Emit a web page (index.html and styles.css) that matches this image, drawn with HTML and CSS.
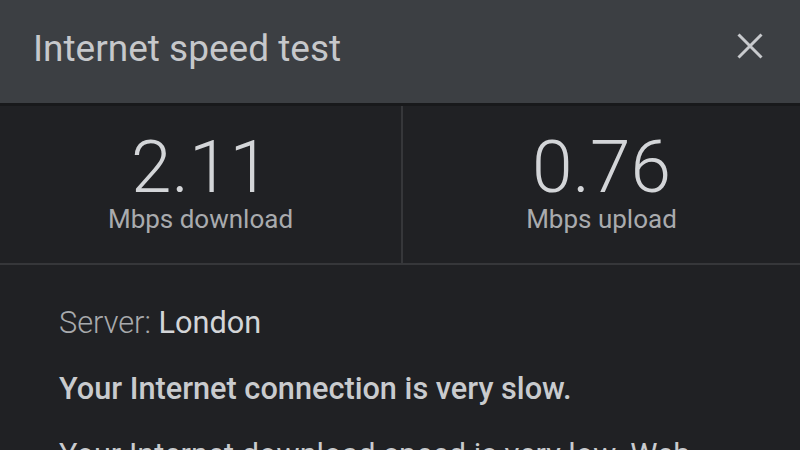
FILE: index.html
```html
<!DOCTYPE html>
<html>
<head>
<meta charset="utf-8">
<link rel="stylesheet" href="styles.css">
</head>
<body>
<div class="dialog">
  <header class="bar">
    <h1 class="title">Internet speed test</h1>
    <svg class="close" width="26" height="26" viewBox="0 0 26 26" aria-label="Close">
      <path d="M1.5 1.5 L24.5 24.5 M24.5 1.5 L1.5 24.5" stroke="#c8cacd" stroke-width="3" fill="none"/>
    </svg>
  </header>
  <section class="stats">
    <div class="stat">
      <div class="value">2.11</div>
      <div class="label">Mbps download</div>
    </div>
    <div class="stat">
      <div class="value">0.76</div>
      <div class="label">Mbps upload</div>
    </div>
  </section>
  <section class="details">
    <p class="server"><span class="key">Server:</span> <span class="val">London</span></p>
    <p class="verdict">Your Internet connection is very slow.</p>
    <p class="desc">Your Internet download speed is very low. Web pages may load slowly.</p>
  </section>
</div>
</body>
</html>
```
FILE: styles.css
```css
html, body {
  margin: 0;
  padding: 0;
  background: #202124;
  overflow: hidden;
}
.dialog {
  width: 800px;
  height: 450px;
  overflow: hidden;
  font-family: Roboto, "Noto Sans", sans-serif;
  background: #202124;
}
.bar {
  height: 106px;
  box-sizing: border-box;
  background: #3c3f43;
  display: flex;
  justify-content: space-between;
  align-items: flex-start;
  padding: 27px 37px 0 33px;
  border-bottom: 3px solid #18191b;
}
.title {
  margin: 0;
  font-size: 37px;
  font-weight: 400;
  line-height: normal;
  color: #c6c8cb;
}
.close {
  margin-top: 6px;
  display: block;
}
.stats {
  display: grid;
  grid-template-columns: 401px 1fr;
  height: 157px;
  border-bottom: 2px solid #36373a;
}
.stat {
  display: flex;
  flex-direction: column;
  align-items: center;
  padding-top: 25px;
}
.stat + .stat {
  border-left: 2px solid #36373a;
}
.value {
  font-size: 73px;
  font-weight: 300;
  line-height: 1;
  color: #d3d5d8;
}
.label {
  margin-top: 2px;
  font-size: 26px;
  line-height: 1;
  color: #a9abae;
}
.details {
  padding: 0 60px 0 59px;
}
.details p {
  margin: 0;
  font-size: 30.7px;
  line-height: 36px;
}
.server {
  padding-top: 40px;
  white-space: nowrap;
}
.key {
  font-weight: 300;
  color: #a8aaad;
}
.val {
  color: #d3d5d8;
}
.verdict {
  margin-top: 30px !important;
  font-weight: 500;
  color: #c9cbce;
  white-space: nowrap;
}
.desc {
  margin-top: 30px !important;
  color: #c9cbce;
}
```
